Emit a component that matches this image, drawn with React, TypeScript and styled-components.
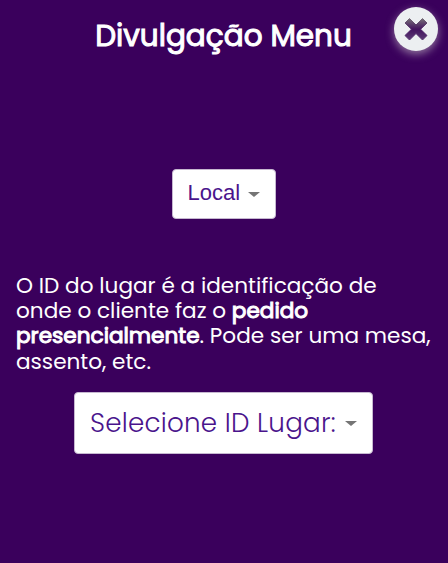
import React from "react";
import styled, { createGlobalStyle } from "styled-components";

const GlobalStyle = createGlobalStyle`
  * { box-sizing: border-box; }
  body { margin: 0; background: #3a005c; }
`;

const Screen = styled.main`
  position: relative;
  width: 448px;
  height: 563px;
  overflow: hidden;
  display: flex;
  flex-direction: column;
  align-items: center;
  padding-right: 1px;
  background: #3a005c;
  color: #fff;
  font-family: Poppins, Inter, sans-serif;
`;

const Title = styled.h1`
  margin: 13px 0 111px;
  height: 45px;
  line-height: 45px;
  font-size: 29.5px;
  font-weight: 400;
  -webkit-text-stroke: 1px #fff;
  white-space: nowrap;
`;

const CloseButton = styled.button`
  position: absolute;
  top: 7px;
  right: 10px;
  width: 44px;
  height: 44px;
  padding: 0;
  border: 0;
  border-radius: 50%;
  background: none;
  filter: drop-shadow(0 3px 4px rgba(236, 239, 225, 0.5));

  svg { display: block; }
`;

const Select = styled.button<{ $large?: boolean }>`
  display: flex;
  align-items: center;
  flex: none;
  width: ${(p) => (p.$large ? 299 : 104)}px;
  height: ${(p) => (p.$large ? 62 : 50)}px;
  padding: 0 15px;
  border: 1px solid #c6b8d0;
  border-radius: 4px;
  background: #fff;
  color: #4a148c;
  font-family: ${(p) => (p.$large ? "Poppins, Inter, sans-serif" : '"Liberation Sans", Arial, sans-serif')};
  font-size: ${(p) => (p.$large ? 26.2 : 22)}px;
  font-weight: ${(p) => (p.$large ? 300 : 400)};
  letter-spacing: ${(p) => (p.$large ? 0.23 : 0)}px;
  white-space: nowrap;
`;

const SelectLabel = styled.span<{ $raise?: number }>`
  padding-bottom: ${(p) => p.$raise ?? 0}px;
`;

const Caret = styled.span`
  margin: 1px 0 0 auto;
  border: 5.5px solid transparent;
  border-width: 5px 6px 0;
  border-top-color: #757575;
`;

const Description = styled.p`
  align-self: stretch;
  margin: 54px 0 18px;
  padding-left: 16px;
  font-size: 21.6px;
  line-height: 25.2px;
`;

const Strong = styled.strong`
  font-weight: 400;
  -webkit-text-stroke: 1px #fff;
`;

export default function App() {
  return (
    <>
      <GlobalStyle />
      <Screen>
        <Title>Divulgação Menu</Title>
        <CloseButton aria-label="Fechar">
          <svg width="44" height="44" viewBox="0 0 44 44">
            <circle cx="22" cy="22" r="22" fill="#eceff1" />
            <path
              d="M15.5 11.5 L22 18 L28.5 11.5 L33 16 L26.5 22.2 L33 28.5 L28.5 33 L22 26.5 L15.5 33 L11 28.5 L17.5 22.2 L11 16 Z"
              fill="url(#cross)"
              stroke="url(#cross)"
              strokeWidth="1"
              strokeLinejoin="round"
            />
            <defs>
              <linearGradient id="cross" x1="0" y1="0" x2="0" y2="1">
                <stop offset="0" stopColor="#777078" />
                <stop offset="0.5" stopColor="#43135f" />
                <stop offset="1" stopColor="#5c3b75" />
              </linearGradient>
            </defs>
          </svg>
        </CloseButton>
        <Select>
          <SelectLabel $raise={3}>Local</SelectLabel>
          <Caret />
        </Select>
        <Description>
          O ID do lugar é a identificação de
          <br />
          onde o cliente faz o <Strong>pedido</Strong>
          <br />
          <Strong>presencialmente</Strong>. Pode ser uma mesa,
          <br />
          assento, etc.
        </Description>
        <Select $large>
          <SelectLabel>Selecione ID Lugar:</SelectLabel>
          <Caret />
        </Select>
      </Screen>
    </>
  );
}
